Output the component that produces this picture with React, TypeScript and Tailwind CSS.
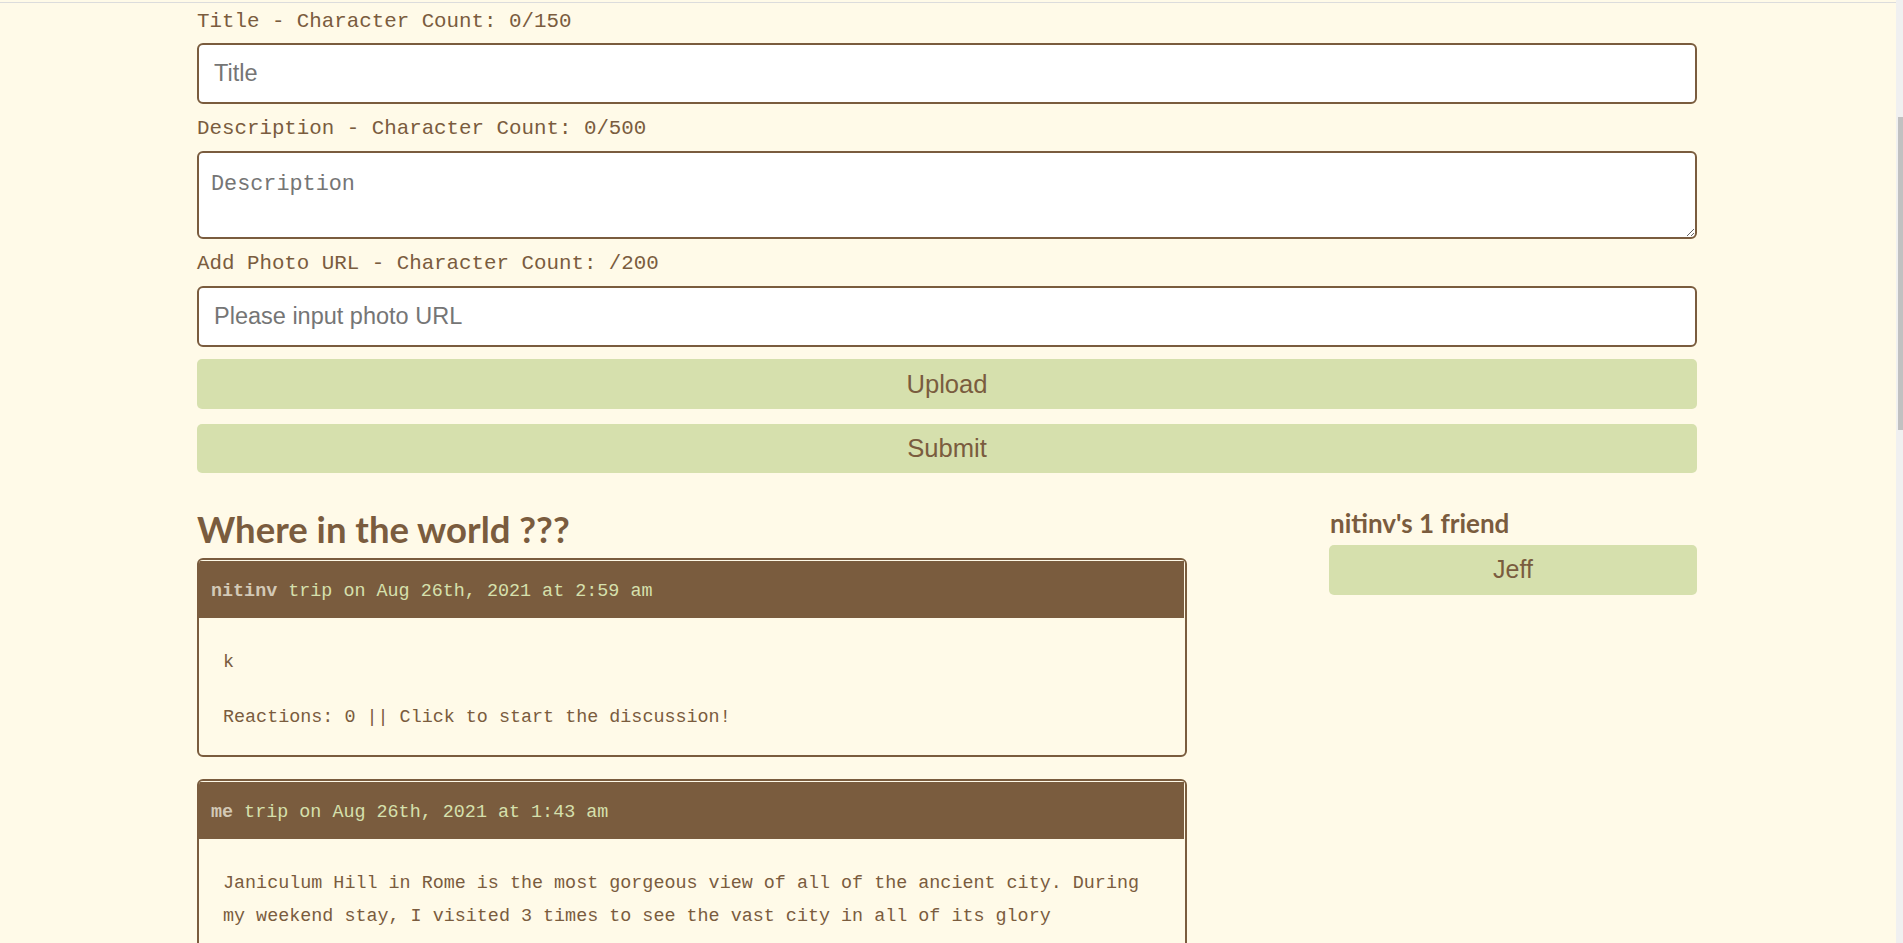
import { useState } from 'react';

type Trip = {
  id: number;
  author: string;
  date: string;
  body: string;
  reactions: number;
};

const trips: Trip[] = [
  { id: 1, author: 'nitinv', date: 'Aug 26th, 2021 at 2:59 am', body: 'k', reactions: 0 },
  {
    id: 2,
    author: 'me',
    date: 'Aug 26th, 2021 at 1:43 am',
    body: 'Janiculum Hill in Rome is the most gorgeous view of all of the ancient city. During my weekend stay, I visited 3 times to see the vast city in all of its glory',
    reactions: 0,
  },
];

function TripCard({ trip }: { trip: Trip }) {
  return (
    <div className="border-2 border-[#7a5c3e] rounded-[6px] overflow-hidden font-['Liberation_Mono',monospace] text-[18.4px]">
      <div className="h-[58px] flex items-center pt-[4px] px-[12px] bg-[#7a5c3e] border-t border-r border-[#fffae8] text-[#d6e0ad]">
        <span className="font-bold text-[#d3c9b6]">{trip.author}</span>
        <span>&nbsp;trip on {trip.date}</span>
      </div>
      <div className="flex flex-col gap-[22px] pt-[28px] pb-[21px] px-[24px] leading-[33px] text-[#7a5c3e]">
        <p>{trip.body}</p>
        <p>Reactions: {trip.reactions} || Click to start the discussion!</p>
      </div>
    </div>
  );
}

const labelCls = "text-[20.8px] leading-[31px] text-[#7a5c3e] font-['Liberation_Mono',monospace]";
const inputCls =
  "h-[61px] bg-white border-2 border-[#7a5c3e] rounded-[6px] px-[15px] text-[23.5px] text-[#333] placeholder:text-[#757575] outline-none font-['Liberation_Sans',Arial,sans-serif]";
const buttonCls =
  "bg-[#d6e0ad] rounded-[5px] text-[#7a5c3e] font-['Liberation_Sans',Arial,sans-serif]";

export default function App() {
  const [title, setTitle] = useState('');
  const [description, setDescription] = useState('');
  const [photo, setPhoto] = useState('');

  return (
    <div className="h-screen overflow-hidden flex bg-[#fffae8]">
      <main className="flex-1 pt-[2px]">
        <div className="border-t border-[#dcdcdc]" />
        <div className="pr-[2px]">
          <div className="w-[1500px] mx-auto pb-16">
            <form className="flex flex-col" onSubmit={(e) => e.preventDefault()}>
              <label className={`mt-[3px] mb-[6px] ${labelCls}`}>
                Title - Character Count: {title.length}/150
              </label>
              <input
                value={title}
                onChange={(e) => setTitle(e.target.value)}
                placeholder="Title"
                className={inputCls}
              />
              <label className={`mt-[9px] mb-[7px] ${labelCls}`}>
                Description - Character Count: {description.length}/500
              </label>
              <textarea
                value={description}
                onChange={(e) => setDescription(e.target.value)}
                placeholder="Description"
                className="h-[88px] bg-white border-2 border-[#7a5c3e] rounded-[6px] px-[12px] pt-[16px] text-[21.8px] text-[#333] placeholder:text-[#757575] outline-none font-['Liberation_Mono',monospace]"
              />
              <label className={`mt-[9px] mb-[7px] ${labelCls}`}>
                Add Photo URL - Character Count: {photo ? photo.length : ''}/200
              </label>
              <input
                value={photo}
                onChange={(e) => setPhoto(e.target.value)}
                placeholder="Please input photo URL"
                className={inputCls}
              />
              <button type="button" className={`mt-[12px] h-[50px] text-[25.6px] ${buttonCls}`}>
                Upload
              </button>
              <button type="submit" className={`mt-[15px] h-[49px] text-[25.6px] ${buttonCls}`}>
                Submit
              </button>
            </form>

            <div className="mt-[35px] flex justify-between items-start">
              <div className="w-[990px]">
                <h2 className="mb-[8px] text-[36.5px] leading-[42px] font-bold text-[#7a5c3e] font-['Lato','Open_Sans',sans-serif]">
                  Where in the world ???
                </h2>
                <div className="flex flex-col gap-[22px]">
                  {trips.map((trip) => (
                    <TripCard key={trip.id} trip={trip} />
                  ))}
                </div>
              </div>

              <div className="w-[368px]">
                <h3 className="pl-[1px] text-[26px] leading-[30px] font-bold text-[#7a5c3e] font-['Lato','Open_Sans',sans-serif]">
                  nitinv's 1 friend
                </h3>
                <button type="button" className={`mt-[7px] w-full h-[50px] text-[25px] ${buttonCls}`}>
                  Jeff
                </button>
              </div>
            </div>
          </div>
        </div>
      </main>

      {/* thin browser scrollbar, as in the screenshot */}
      <div className="w-[7px] shrink-0 bg-[#f0f0f0] flex flex-col items-end">
        <div className="mt-[117px] w-[5px] h-[313px] bg-[#c1c1c1]" />
      </div>
    </div>
  );
}
